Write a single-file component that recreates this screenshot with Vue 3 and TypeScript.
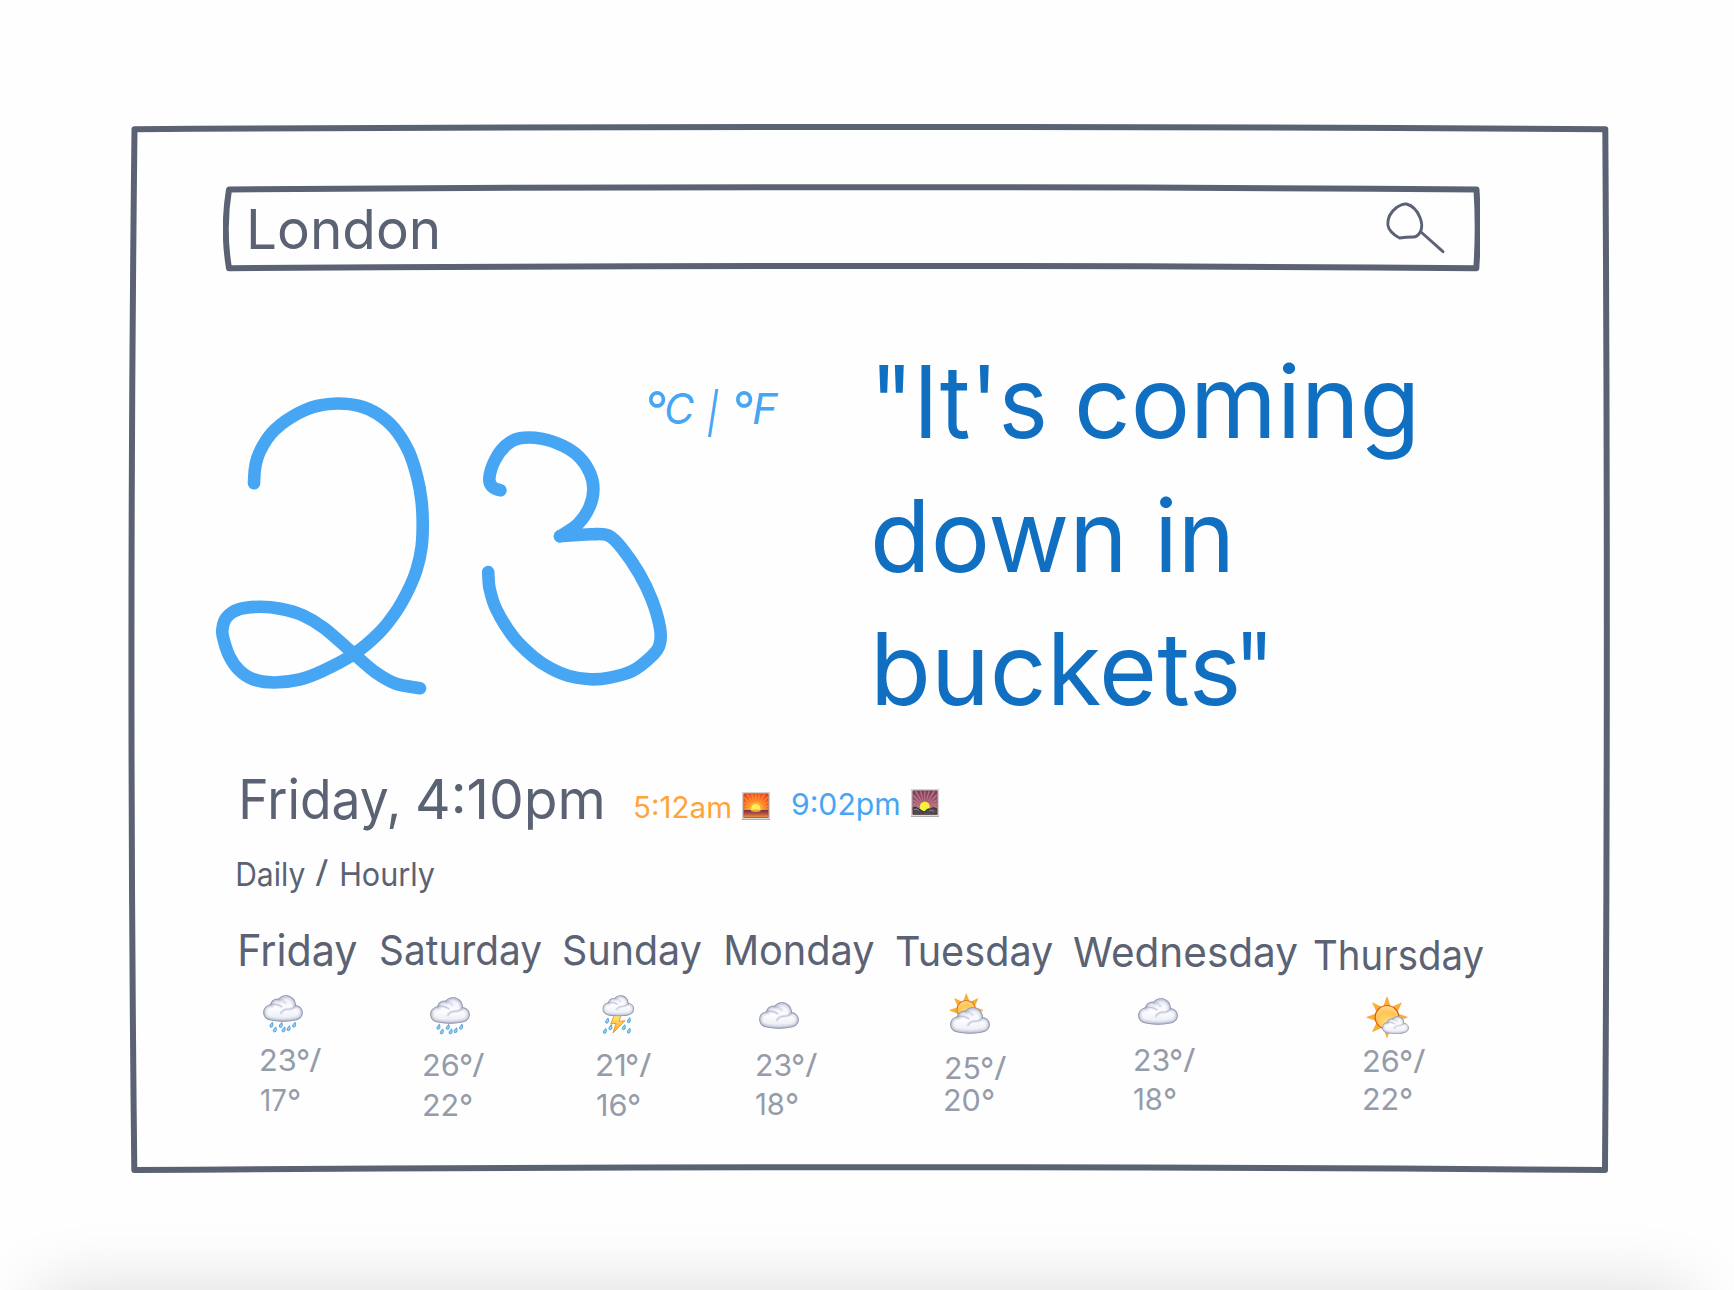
<script setup lang="ts">
type Point = [number, number]

interface Word {
  text: string
  width: number
  gap?: number
  // Ink top above the baseline and ink height, for signs drawn at a size of their own.
  top?: number
  height?: number
}

interface Label {
  words: Word[]
  size: number
  left?: number
  baseline: number
  italic?: boolean
}

interface Day {
  key: string
  column: number
  name: Label
  icon: 'rain' | 'storm' | 'cloud' | 'cloudy-sun' | 'sun-cloud'
  iconLeft: number
  iconTop: number
  iconWidth: number
  iconHeight: number
  high: Label
  low: Label
}

const BASELINE = 0.8636
const canvas = document.createElement('canvas').getContext('2d')!

// Box that holds a label: its baseline is counted from the top of the row.
function box(l: Label) {
  return {
    height: `${l.size}px`,
    lineHeight: `${l.size}px`,
    fontSize: `${l.size}px`,
    fontStyle: l.italic ? 'italic' : 'normal',
    marginLeft: `${l.left ?? 0}px`,
    marginTop: `${l.baseline - l.size * BASELINE}px`,
  }
}

// Stretches a word so that its ink fills the width it is given.
function fit(l: Label, w: Word) {
  canvas.font = `${l.italic ? 'italic ' : ''}400 ${l.size}px Inter, sans-serif`
  const m = canvas.measureText(w.text)
  const sx = w.width / (m.actualBoundingBoxLeft + m.actualBoundingBoxRight)
  let sy = 1
  let dy = 0
  if (w.top !== undefined && w.height !== undefined) {
    sy = w.height / (m.actualBoundingBoxAscent + m.actualBoundingBoxDescent)
    dy = m.actualBoundingBoxAscent * sy - w.top
  }
  return {
    width: `${w.width}px`,
    marginLeft: `${w.gap ?? 0}px`,
    transformOrigin: `0 ${l.size * BASELINE}px`,
    transform: `translateY(${dy}px) scale(${sx}, ${sy}) translateX(${m.actualBoundingBoxLeft}px)`,
  }
}

// Smooth curve through all of the points.
function curve(p: Point[]): string {
  let d = `M${p[0][0]} ${p[0][1]}`
  for (let i = 0; i < p.length - 1; i++) {
    const a = p[i - 1] ?? p[i]
    const b = p[i]
    const c = p[i + 1]
    const e = p[i + 2] ?? c
    d += `C${b[0] + (c[0] - a[0]) / 6} ${b[1] + (c[1] - a[1]) / 6} ${c[0] - (e[0] - b[0]) / 6} ${c[1] - (e[1] - b[1]) / 6} ${c[0]} ${c[1]}`
  }
  return d
}

const strokes = [
  curve([[254, 483.3], [254.8, 470], [257.3, 458], [262.7, 446], [270.8, 434], [281, 424.3], [292, 416.8], [304, 410.5], [317, 406], [337.8, 403.5], [359, 405.8], [377, 413.6], [394.4, 428.5], [409, 452], [417.4, 478], [421.4, 500], [422.7, 522.7], [421.6, 546.7], [416.5, 570], [407.8, 591], [396, 611.7], [379, 633], [353.9, 654], [322.5, 671], [299.5, 679.5], [273.5, 682.5], [252.5, 679], [238.5, 669.5], [229.5, 656.5], [224, 641], [222.3, 630], [226.5, 617.5], [239, 609.3], [259.3, 606.8], [280.4, 608.7], [302.6, 615.2], [324, 628], [353.9, 654], [376, 672.7], [396, 683.8], [420, 688.3]]),
  curve([[500.4, 490.3], [492.5, 487], [489.3, 478.3], [495, 460], [506, 445.3], [519.6, 438.3], [542.5, 438.9], [563.6, 446.2], [579.6, 457.3], [590, 473], [593.4, 489.5], [589.5, 507], [578, 524], [560, 536.3]]),
  curve([[560, 536.3], [590.4, 534.3], [608.5, 535.5], [622.5, 549], [639.5, 574], [652, 600], [660, 628], [659.5, 645], [651.6, 656.3], [632.5, 670.9], [610, 677.6], [590, 679.3], [569, 676], [551, 668.5], [534, 657.3], [513.8, 637.5], [496.600, 610], [489.7, 589], [488.2, 572]]),
]

const city: Label = { size: 55.5, left: 27, baseline: 66.3, words: [{ text: 'London', width: 187.5 }] }
const units: Label = {
  size: 43,
  left: 0.8,
  baseline: 151,
  italic: true,
  words: [
    { text: '°', width: 17.2, top: 32.3, height: 16.5 },
    { text: 'C', width: 27.9, gap: 1.1 },
    { text: '|', width: 11.3, gap: 13, top: 35.3, height: 48.6 },
    { text: '°', width: 17.2, gap: 16.3, top: 32.3, height: 16.5 },
    { text: 'F', width: 25.2, gap: 1.6 },
  ],
}
const quote: Label[] = [
  { size: 100, left: 3.7, baseline: 87.2, words: [{ text: '"It\'s', width: 164.3 }, { text: 'coming', width: 334, gap: 35.6 }] },
  { size: 100, left: 0, baseline: 87.2, words: [{ text: 'down', width: 245.6 }, { text: 'in', width: 68, gap: 39.4 }] },
  { size: 100, left: 1.5, baseline: 87.2, words: [{ text: 'buckets', width: 359.5 }, { text: '"', width: 22.8, gap: 6.500 }] },
]
const now: Label = { size: 55.5, baseline: 78.5, words: [{ text: 'Friday,', width: 155.7 }, { text: '4:10pm', width: 184.3, gap: 20.3 }] }
const sunrise: Label = { size: 29.3, left: 32.6, baseline: 78, words: [{ text: '5:12am', width: 95.4 }] }
const sunset: Label = { size: 29.8, left: 22.2, baseline: 76, words: [{ text: '9:02pm', width: 106.5 }] }
const mode: Label = {
  size: 33,
  baseline: 41,
  words: [
    { text: 'Daily', width: 67.8 },
    { text: '/', width: 13.7, gap: 10.5, top: 26, height: 27 },
    { text: 'Hourly', width: 93.5, gap: 12.5 },
  ],
}

function name(text: string, size: number, width: number, baseline: number): Label {
  return { size, baseline, words: [{ text, width }] }
}

function high(digits: string, left: number, width: number, baseline: number): Label {
  return {
    size: 29.8,
    left,
    baseline,
    words: [
      { text: digits, width: width - 27.8 },
      { text: '°', width: 11.5, gap: 2, top: 22.3, height: 11.500 },
      { text: '/', width: 13, gap: 1.3, top: 23, height: 24 },
    ],
  }
}

function low(digits: string, left: number, width: number, baseline: number): Label {
  return {
    size: 29.8,
    left,
    baseline,
    words: [
      { text: digits, width: width - 13.5 },
      { text: '°', width: 11.5, gap: 2, top: 22.3, height: 11.500 },
    ],
  }
}

const days: Day[] = [
  { key: 'fri', column: 141, name: name('Friday', 43.6, 117, 52), icon: 'rain', iconLeft: 23, iconTop: 5.2, iconWidth: 40, iconHeight: 38, high: high('23', 20.5, 62, 26.6), low: low('17', 20.5, 38.5, 26.6) },
  { key: 'sat', column: 182.5, name: name('Saturday', 41, 160, 50.3), icon: 'rain', iconLeft: 49, iconTop: 6.5, iconWidth: 40, iconHeight: 38, high: high('26', 42.5, 62, 31.3), low: low('22', 42.5, 47.5, 31.3) },
  { key: 'sun', column: 162.2, name: name('Sunday', 41.5, 137.5, 51), icon: 'storm', iconLeft: 38.5, iconTop: 4.7, iconWidth: 32.5, iconHeight: 39, high: high('21', 33, 55.5, 31.3), low: low('16', 33, 42.5, 32) },
  { key: 'mon', column: 170.3, name: name('Monday', 41.5, 148.3, 51), icon: 'cloud', iconLeft: 33.8, iconTop: 12.2, iconWidth: 40, iconHeight: 27, high: high('23', 31, 61.5, 31.3), low: low('18', 30.6, 41, 30.3) },
  { key: 'tue', column: 178.5, name: name('Tuesday', 41.5, 157, 51.5), icon: 'cloudy-sun', iconLeft: 54, iconTop: 4.2, iconWidth: 40, iconHeight: 40, high: high('25', 49.8, 61.5, 34.3), low: low('20', 48.7, 48.5, 27.2) },
  { key: 'wed', column: 239.5, name: name('Wednesday', 41, 223, 52.7), icon: 'cloud', iconLeft: 63.5, iconTop: 7.6, iconWidth: 40, iconHeight: 27, high: high('23', 60.3, 61.5, 26.3), low: low('18', 59.8, 41, 25.3) },
  { key: 'thu', column: 169, name: name('Thursday', 41, 169, 55), icon: 'sun-cloud', iconLeft: 53.5, iconTop: 6.5, iconWidth: 42.5, iconHeight: 41, high: high('26', 49.8, 62, 28), low: low('22', 49.8, 47.5, 25.3) },
]

const rainDrops: Point[] = [[8.3, 29.8], [11.7, 34.5], [17.7, 30], [20.5, 34.5], [25.5, 33.3], [31, 29.8]]
const stormDrops: Point[] = [[5, 25.7], [8.3, 32.3], [2.7, 36], [21.7, 32.3], [26.7, 25.3], [26.7, 35.7]]

function rays(cx: number, cy: number, inner: number, outer: number): string {
  let d = ''
  for (let i = 0; i < 8; i++) {
    const a = (i * Math.PI) / 4
    const at = (r: number, t: number) => `${(cx + r * Math.cos(t)).toFixed(2)} ${(cy + r * Math.sin(t)).toFixed(2)}`
    d += `M${at(inner, a - 0.27)}L${at(outer, a)}L${at(inner, a + 0.27)}Z`
  }
  return d
}

function beams(cx: number, cy: number): string {
  let d = ''
  for (let i = 0; i < 24; i++) {
    const a = (i * Math.PI) / 12
    d += `M${cx} ${cy}L${(cx + 30 * Math.cos(a - 0.05)).toFixed(2)} ${(cy + 30 * Math.sin(a - 0.05)).toFixed(2)}L${(cx + 30 * Math.cos(a + 0.05)).toFixed(2)} ${(cy + 30 * Math.sin(a + 0.05)).toFixed(2)}Z`
  }
  return d
}
</script>

<template>
  <main class="page">
    <svg class="defs" width="0" height="0" aria-hidden="true">
      <defs>
        <linearGradient id="cloud-fill" x1="0" y1="0" x2="0" y2="1">
          <stop offset="0" stop-color="#eceef8" />
          <stop offset=".5" stop-color="#fdfdff" />
          <stop offset="1" stop-color="#e8eaf3" />
        </linearGradient>
        <radialGradient id="sun-fill" cx=".5" cy=".75" r=".8">
          <stop offset="0" stop-color="#ffdf78" />
          <stop offset=".6" stop-color="#ffc552" />
          <stop offset="1" stop-color="#ffe0a5" />
        </radialGradient>
        <linearGradient id="bolt-fill" x1="0" y1="0" x2="0" y2="1">
          <stop offset="0" stop-color="#fff07c" />
          <stop offset="1" stop-color="#ffa51f" />
        </linearGradient>
        <radialGradient id="dawn" cx=".48" cy=".65" r=".75">
          <stop offset="0" stop-color="#ffe14a" />
          <stop offset=".35" stop-color="#ff9c2a" />
          <stop offset=".7" stop-color="#fa6420" />
          <stop offset="1" stop-color="#ec421c" />
        </radialGradient>
        <linearGradient id="sea" x1="0" y1="0" x2="0" y2="1">
          <stop offset="0" stop-color="#6d2f55" />
          <stop offset=".5" stop-color="#b8523b" />
          <stop offset="1" stop-color="#f79a3e" />
        </linearGradient>
        <linearGradient id="dusk" x1="0" y1="0" x2="0" y2="1">
          <stop offset="0" stop-color="#7b3b5c" />
          <stop offset=".7" stop-color="#b5677c" />
          <stop offset="1" stop-color="#d98f72" />
        </linearGradient>
        <path id="cloud-shape" d="M7 25.3C2.5 24.3 .2 21 .2 17.2C.3 13 3.3 10 7.3 9.4C8 5.4 11.6 3 15.6 3.8C17.5 1.2 20.5 .1 23.5 .2C29 .5 33 5 32.9 10.2C37 10.6 39.8 13.8 39.8 17.6C39.8 21.5 37 24.4 33 25.3C26 27.1 14 27.1 7 25.3Z" />
        <clipPath id="cloud-clip"><use href="#cloud-shape" /></clipPath>
        <symbol id="cloud" viewBox="0 0 40 27" overflow="visible">
          <use href="#cloud-shape" fill="url(#cloud-fill)" />
          <g clip-path="url(#cloud-clip)" fill="none" stroke-linecap="round">
            <use href="#cloud-shape" stroke="#8d92b4" stroke-opacity=".15" stroke-width="8" />
            <use href="#cloud-shape" stroke="#7b80a0" stroke-opacity=".24" stroke-width="4.5" />
            <use href="#cloud-shape" stroke="#62677f" stroke-opacity=".6" stroke-width="1.8" />
            <path d="M7.3 9.4Q14.5 8.5 18.5 11.5M18 18Q20.5 14 25.5 14.2Q30.5 14.2 32.9 10.2M15.6 3.8Q20 5 22.5 8" stroke="#a3a7c4" stroke-opacity=".26" stroke-width="2.8" />
            <path d="M7.3 9.4Q14.5 8.5 18.5 11.5M18 18Q20.500 14 25.500 14.200Q30.500 14.200 32.900 10.200" stroke="#8c90aa" stroke-opacity=".42" stroke-width=".9" />
          </g>
        </symbol>
        <symbol id="drop" viewBox="0 0 4 6" overflow="visible">
          <path d="M3.2 .2C4.3 2.6 4 5.6 1.8 5.7C-.6 5.6 .3 2.5 3.2 .2Z" fill="#8fd4f7" stroke="#2c87c6" stroke-width=".8" />
        </symbol>
      </defs>
    </svg>

    <section class="frame">
      <svg class="outline" viewBox="124 120 1486 1056" aria-hidden="true">
        <path d="M134.5 129.300Q870 124.500 1605.300 129.300Q1608.500 650 1605 1170Q870 1164.500 134.300 1170Q128.500 650 134.500 129.300Z" />
      </svg>

      <div class="search">
        <svg class="outline" viewBox="223 183 1257 90" aria-hidden="true">
          <path d="M229 189.5Q850 184.8 1476.5 189.5Q1479 229 1476.3 268.2Q850 263.7 229 268.2Q222.5 229 229 189.5Z" />
        </svg>
        <div class="label" :style="box(city)"><span v-for="(w, i) in city.words" :key="i" :style="fit(city, w)">{{ w.text }}</span></div>
        <svg class="magnifier" viewBox="1384 200 64 56" width="64" height="56" aria-label="Search">
          <path d="M1399.500 238C1393 235 1388 229 1387.800 224.500C1387.500 217 1392 211 1396.500 207.500C1401 204.500 1404.500 203.700 1406.500 204C1414 206 1418 212.500 1420 217.500C1422.300 223 1422 228 1420.500 231.500C1418.500 235.500 1416 237 1413 237Q1406 237.200 1399.500 238ZM1421 232L1443 251.700" />
        </svg>
      </div>

      <div class="hero">
        <svg class="reading" viewBox="210 390 437 305" width="437" height="305" role="img" aria-label="23">
          <path v-for="(d, i) in strokes" :key="i" :d="d" />
        </svg>
        <div class="label blue" :style="box(units)"><span v-for="(w, i) in units.words" :key="i" :style="fit(units, w)">{{ w.text }}</span></div>
        <div class="quote">
          <div v-for="(line, n) in quote" :key="n" class="quote-line">
            <div class="label" :style="box(line)"><span v-for="(w, i) in line.words" :key="i" :style="fit(line, w)">{{ w.text }}</span></div>
          </div>
        </div>
      </div>

      <div class="now">
        <div class="label" :style="box(now)"><span v-for="(w, i) in now.words" :key="i" :style="fit(now, w)">{{ w.text }}</span></div>
        <div class="label orange" :style="box(sunrise)"><span v-for="(w, i) in sunrise.words" :key="i" :style="fit(sunrise, w)">{{ w.text }}</span></div>
        <svg class="photo rise" viewBox="0 0 28 28" width="28" height="28" aria-hidden="true">
          <rect x=".4" y=".4" width="27.2" height="27.2" fill="#f6f4f2" stroke="#c9c8c8" stroke-width=".8" />
          <path d="M0 27.3H28" stroke="#a9a9aa" stroke-width="1.2" />
          <rect x="1.8" y="1.8" width="24.4" height="23.8" fill="url(#dawn)" />
          <svg x="1.8" y="1.8" width="24.4" height="16.2" viewBox="1.8 1.8 24.4 16.2">
            <path :d="beams(13.8, 17)" fill="#ffb04e" opacity=".5" />
            <circle cx="13.8" cy="16.5" r="6.5" fill="#ffb52e" opacity=".6" />
            <circle cx="13.8" cy="16.5" r="4.5" fill="#ffee55" />
          </svg>
          <rect x="1.8" y="18" width="24.4" height="7.6" fill="url(#sea)" />
          <ellipse cx="13.8" cy="18.6" rx="5" ry="1.4" fill="#ffc23c" opacity=".8" />
          <rect x="1.8" y="1.8" width="24.4" height="23.8" fill="none" stroke="#8c3a22" stroke-width=".6" />
        </svg>
        <div class="label blue" :style="box(sunset)"><span v-for="(w, i) in sunset.words" :key="i" :style="fit(sunset, w)">{{ w.text }}</span></div>
        <svg class="photo set" viewBox="0 0 28 28" width="28" height="28" aria-hidden="true">
          <rect x=".4" y=".4" width="27.2" height="27.2" fill="#f6f4f2" stroke="#c9c8c8" stroke-width=".8" />
          <path d="M0 27.3H28" stroke="#a9a9aa" stroke-width="1.2" />
          <svg x="1.8" y="1.8" width="24.4" height="23.8" viewBox="1.8 1.8 24.4 23.8">
            <rect x="1.8" y="1.8" width="24.4" height="23.8" fill="url(#dusk)" />
            <path :d="beams(13.8, 18)" fill="#e9a3a0" opacity=".5" />
            <circle cx="13.8" cy="17.8" r="5" fill="#f7f03c" />
            <path d="M0 20.5Q4 16.5 7 19.5Q11 22 13.5 23Q16.500 18.500 19.500 20Q23 16.500 28 22V27H0Z" fill="#4a4c50" stroke="#222326" stroke-width=".9" />
            <path d="M3 20.8Q5.5 18.8 8 21.5M18 22Q20.5 19.8 23 22.5" fill="none" stroke="#8a8d90" stroke-width="1" />
          </svg>
          <rect x="1.8" y="1.8" width="24.4" height="23.8" fill="none" stroke="#4b2638" stroke-width=".6" />
        </svg>
      </div>

      <div class="mode">
        <div class="label" :style="box(mode)"><span v-for="(w, i) in mode.words" :key="i" :style="fit(mode, w)">{{ w.text }}</span></div>
      </div>

      <div class="days">
        <article v-for="day in days" :key="day.key" :style="{ width: `${day.column}px` }">
          <header class="day-name">
            <div class="label" :style="box(day.name)"><span v-for="(w, i) in day.name.words" :key="i" :style="fit(day.name, w)">{{ w.text }}</span></div>
          </header>
          <div class="day-icon">
            <svg
              :viewBox="`0 0 ${day.iconWidth} ${day.iconHeight}`"
              :width="day.iconWidth"
              :height="day.iconHeight"
              :style="{ marginLeft: `${day.iconLeft}px`, marginTop: `${day.iconTop}px` }"
              aria-hidden="true"
            >
              <template v-if="day.icon === 'rain'">
                <use href="#cloud" width="40" height="27" />
                <use v-for="(p, i) in rainDrops" :key="i" href="#drop" :x="p[0] - 1.8" :y="p[1] - 2.8" width="3.6" height="5.6" />
              </template>
              <template v-else-if="day.icon === 'storm'">
                <path d="M12.7 19L8.7 29L14 28.3L11 38L23 25.7L17 26.3L19.5 19Z" fill="url(#bolt-fill)" stroke="#f0901e" stroke-width=".9" />
                <use href="#cloud" width="32.5" height="21.5" />
                <use v-for="(p, i) in stormDrops" :key="i" href="#drop" :x="p[0] - 1.8" :y="p[1] - 2.8" width="3.6" height="5.6" />
              </template>
              <template v-else-if="day.icon === 'cloudy-sun'">
                <path :d="rays(16.3, 16.3, 10, 16.6)" fill="#fcae2c" stroke="#f0951c" stroke-width=".4" />
                <circle cx="16.3" cy="15.8" r="9.3" fill="url(#sun-fill)" stroke="#e2701a" stroke-width="1.1" />
                <use href="#cloud" y="13" width="40" height="27" />
              </template>
              <template v-else-if="day.icon === 'sun-cloud'">
                <path :d="rays(20, 20.3, 12, 20.5)" fill="#fcae2c" stroke="#f0951c" stroke-width=".4" />
                <circle cx="20" cy="20.3" r="11.8" fill="url(#sun-fill)" stroke="#e0561a" stroke-width="1.2" />
                <use href="#cloud" x="15" y="19" width="27" height="18.2" />
              </template>
              <use v-else href="#cloud" width="40" height="27" />
            </svg>
          </div>
          <div class="temp">
            <div class="label" :style="box(day.high)"><span v-for="(w, i) in day.high.words" :key="i" :style="fit(day.high, w)">{{ w.text }}</span></div>
          </div>
          <div class="temp">
            <div class="label" :style="box(day.low)"><span v-for="(w, i) in day.low.words" :key="i" :style="fit(day.low, w)">{{ w.text }}</span></div>
          </div>
        </article>
      </div>
    </section>
    <div class="dock-shadow"></div>
  </main>
</template>

<style>
body {
  margin: 0;
  background: #fefefe;
}
</style>

<style scoped>
.page {
  display: flex;
  flex-direction: column;
  height: 1290px;
  overflow: hidden;
  background: #fefefe;
  color: #5b6274;
  font-family: Inter, sans-serif;
}
.defs {
  position: absolute;
}
.frame {
  position: relative;
  display: flex;
  flex-direction: column;
  flex: none;
  width: 1486px;
  height: 1056px;
  margin: 120px 0 0 124px;
}
.outline {
  position: absolute;
  inset: 0;
  width: 100%;
  height: 100%;
  fill: none;
  stroke: #5b6274;
  stroke-width: 6;
  stroke-linejoin: round;
}
.label {
  display: flex;
  flex: none;
  white-space: pre;
}
.label span {
  display: block;
  flex: none;
}
.search {
  position: relative;
  display: flex;
  align-items: flex-start;
  flex: none;
  width: 1257px;
  height: 90px;
  margin: 63px 0 0 99px;
}
.magnifier {
  margin: 17px 32px 0 auto;
  fill: none;
  stroke: #5b6274;
  stroke-width: 2.9;
  stroke-linecap: round;
  stroke-linejoin: round;
}
.hero {
  display: flex;
  align-items: flex-start;
  flex: none;
  height: 467px;
  margin-left: 86px;
}
.reading {
  flex: none;
  margin-top: 117px;
  overflow: visible;
  fill: none;
  stroke: #47a6f3;
  stroke-width: 12.6;
  stroke-linecap: round;
  stroke-linejoin: round;
}
.blue {
  color: #47a6f3;
}
.orange {
  color: #ffa43b;
}
.quote {
  display: flex;
  flex-direction: column;
  margin: 78.3px 0 0 96.6px;
  color: #116fc1;
}
.quote-line {
  display: flex;
  align-items: flex-start;
  height: 133.5px;
}
.now {
  display: flex;
  align-items: flex-start;
  flex: none;
  height: 105px;
  margin-left: 118px;
}
.photo {
  flex: none;
}
.rise {
  margin: 51.5px 0 0 12px;
}
.set {
  margin: 48.5px 0 0 12px;
}
.mode {
  display: flex;
  align-items: flex-start;
  flex: none;
  height: 70px;
  margin-left: 112.7px;
}
.days {
  display: flex;
  flex: none;
  margin-left: 116px;
}
.days article {
  display: flex;
  flex-direction: column;
  flex: none;
}
.day-name {
  display: flex;
  align-items: flex-start;
  height: 75px;
}
.day-icon {
  display: flex;
  align-items: flex-start;
  height: 55px;
}
.day-icon svg {
  flex: none;
  overflow: visible;
}
.temp {
  display: flex;
  align-items: flex-start;
  height: 40px;
  color: #959ca9;
}
.dock-shadow {
  flex: none;
  height: 200px;
  margin: 114px 44px 0 38px;
  box-shadow: 0 0 70px rgba(0, 0, 0, 0.14);
}
</style>
